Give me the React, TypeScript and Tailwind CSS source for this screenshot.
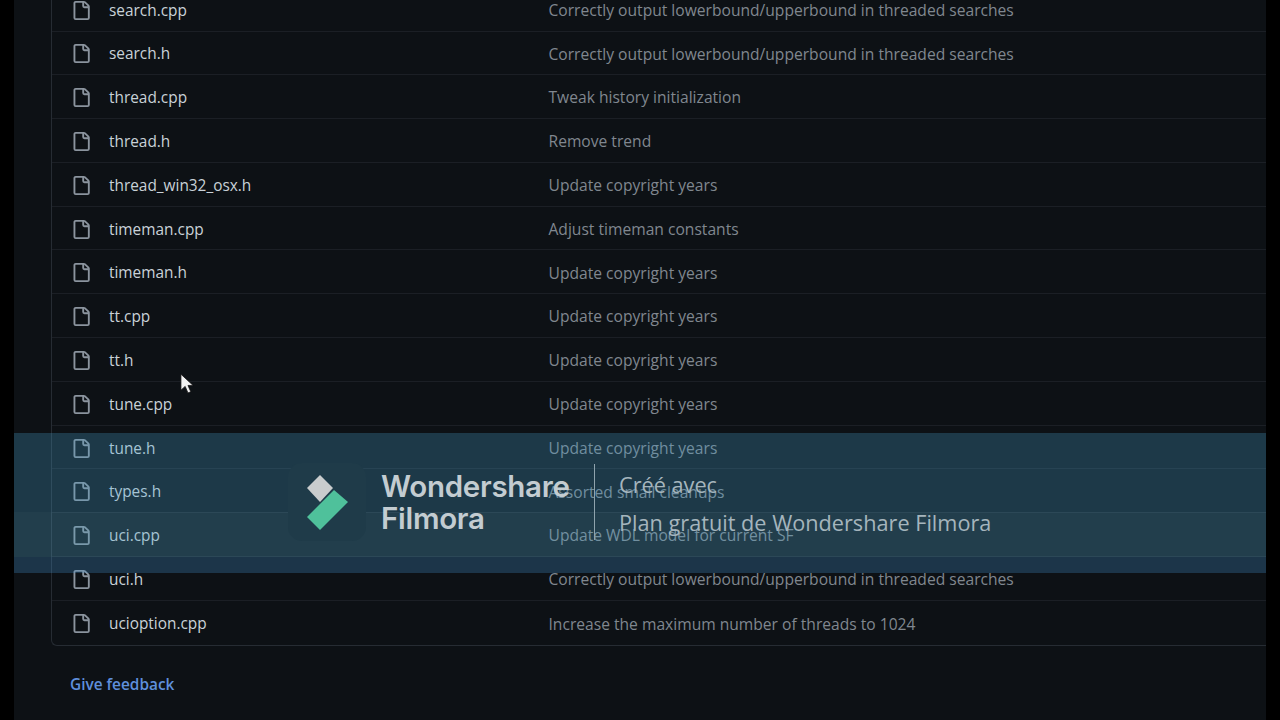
const files = [
  ['search.cpp', 'Correctly output lowerbound/upperbound in threaded searches'],
  ['search.h', 'Correctly output lowerbound/upperbound in threaded searches'],
  ['thread.cpp', 'Tweak history initialization'],
  ['thread.h', 'Remove trend'],
  ['thread_win32_osx.h', 'Update copyright years'],
  ['timeman.cpp', 'Adjust timeman constants'],
  ['timeman.h', 'Update copyright years'],
  ['tt.cpp', 'Update copyright years'],
  ['tt.h', 'Update copyright years'],
  ['tune.cpp', 'Update copyright years'],
  ['tune.h', 'Update copyright years'],
  ['types.h', 'Assorted small cleanups'],
  ['uci.cpp', 'Update WDL model for current SF'],
  ['uci.h', 'Correctly output lowerbound/upperbound in threaded searches'],
  ['ucioption.cpp', 'Increase the maximum number of threads to 1024'],
];

function FileIcon() {
  return (
    <svg viewBox="0 0 16 16" preserveAspectRatio="none" className="w-5 h-[19px] mt-[2px] shrink-0" fill="#8b949e">
      <path d="M2 1.75C2 .784 2.784 0 3.75 0h6.586c.464 0 .909.184 1.237.513l2.914 2.914c.329.328.513.773.513 1.237v9.586A1.75 1.75 0 0 1 13.25 16h-9.5A1.75 1.75 0 0 1 2 14.25Zm1.75-.25a.25.25 0 0 0-.25.25v12.5c0 .138.112.25.25.25h9.5a.25.25 0 0 0 .25-.25V6h-2.75A1.75 1.75 0 0 1 9 4.25V1.5Zm6.75.062V4.25c0 .138.112.25.25.25h2.688l-.011-.013-2.914-2.914-.013-.011Z" />
    </svg>
  );
}

function Row({ name, msg, last }: { name: string; msg: string; last: boolean }) {
  return (
    <div className={`flex items-center h-[43.8px] pl-[19px] ${last ? '' : 'border-b border-[#1b1f25]'}`}>
      <FileIcon />
      <span className="w-[457.5px] pl-[18px] pt-[2px] text-[15.4px] text-[#c9d1d8] shrink-0">{name}</span>
      <span className="pt-[3px] text-[15.62px] text-[#80878f]">{msg}</span>
    </div>
  );
}

function Watermark() {
  return (
    <div className="absolute left-[14px] right-[14px] top-[433px] h-[140px]">
      {/* bands of the banner */}
      <div className="flex flex-col h-full">
        <div className="h-[79px] bg-[rgba(73,163,205,0.28)]" />
        <div className="h-[45px] bg-[rgba(85,165,200,0.31)]" />
        <div className="h-[16px] bg-[rgba(70,150,215,0.27)]" />
      </div>
      <div className="absolute inset-0 flex items-center pl-[274px] pb-[2px]">
        <div className="w-[78px] h-[78px] rounded-[14px] bg-[#1f3b49] flex items-center justify-center">
          <svg viewBox="0 0 44 56" className="w-[44px] h-[56px]">
            <path d="M15 1 28 14 15 28 2 14Z" fill="#c9cccd" />
            <path d="M29 16 43 28 15 56 2 43Z" fill="#4fc19b" />
          </svg>
        </div>
        <div className="ml-[15px] w-[213px] font-['Inter',sans-serif] font-semibold text-[29.5px] leading-[32px] tracking-[-0.3px] text-[#c3ccd1]">
          <div>Wondershare</div>
          <div>Filmora</div>
        </div>
        <div className="w-px h-[76px] bg-[#8fa3ad]" />
        <div className="ml-[24px] pt-[3px] flex flex-col gap-[12px] text-[21.7px] leading-[26px] text-[#a5b5bd]">
          <div>Créé avec</div>
          <div>Plan gratuit de Wondershare Filmora</div>
        </div>
      </div>
    </div>
  );
}

export default function App() {
  return (
    <div className="relative flex h-screen overflow-hidden bg-black font-['Open_Sans',sans-serif] text-[16px]">
      <div className="w-[14px] shrink-0" />
      <main className="flex-1 bg-[#0d1115] pl-[37px]">
        <div className="-mt-[12.3px] border-l border-b border-[#262c33] rounded-bl-md">
          {files.map(([name, msg], i) => (
            <Row key={name} name={name} msg={msg} last={i === files.length - 1} />
          ))}
        </div>
        <a className="block mt-[27px] ml-[19px] font-semibold text-[15.4px] text-[#5f8fdc]">Give feedback</a>
      </main>
      <div className="w-[14px] shrink-0" />
      <Watermark />
      {/* mouse cursor */}
      <svg viewBox="0 0 16 24" className="absolute left-[180px] top-[373px] w-[15px] h-[23px]">
        <path d="M1 1v17l4.5-4 3 7 3-1.3-3-6.7H14Z" fill="#f2f2f2" stroke="#111" strokeWidth="0.8" />
      </svg>
    </div>
  );
}
